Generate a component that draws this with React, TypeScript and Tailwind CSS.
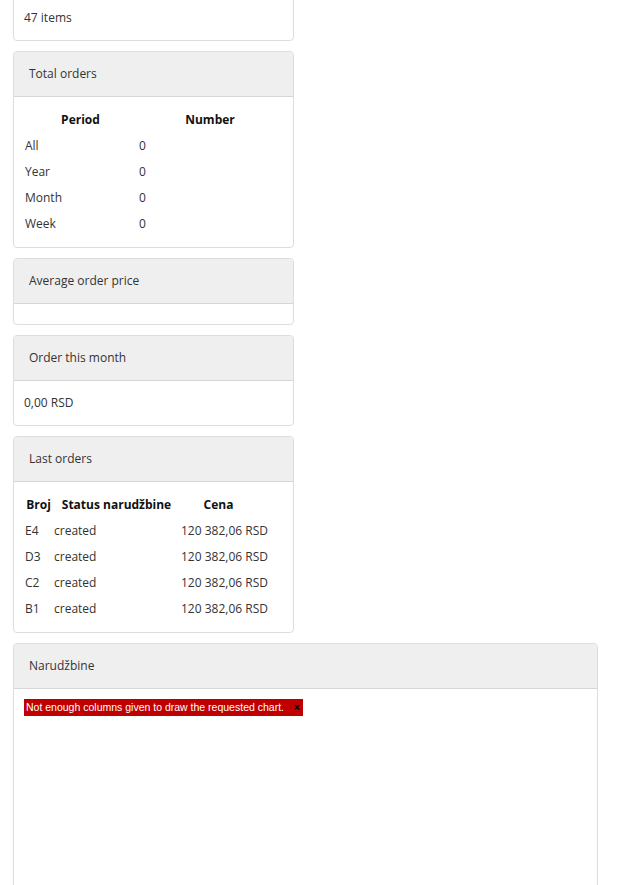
import { ReactNode } from 'react'

const lastOrders = [
	{ id: 'E4', status: 'created', price: '120 382,06 RSD' },
	{ id: 'D3', status: 'created', price: '120 382,06 RSD' },
	{ id: 'C2', status: 'created', price: '120 382,06 RSD' },
	{ id: 'B1', status: 'created', price: '120 382,06 RSD' },
]

const periods = ['All', 'Year', 'Month', 'Week']

const Panel = ({
	title,
	children,
	className = 'w-[281px]',
	bodyClassName = '',
}: {
	title?: string
	children?: ReactNode
	className?: string
	bodyClassName?: string
}) => (
	<div className={`mb-[10px] rounded border border-[#dddddd] bg-white ${className}`}>
		{title && (
			<div className="rounded-t border-b border-[#d6d6d6] bg-[#efefef] px-[15px] py-[10px] leading-[24px]">
				{title}
			</div>
		)}
		<div className={`p-[10px] leading-[24px] ${bodyClassName}`}>{children}</div>
	</div>
)

export default function App() {
	return (
		<div
			className="min-h-[885px] overflow-hidden bg-white pl-[13px] text-[12px] text-[#333333]"
			style={{ fontFamily: '"Open Sans", "Noto Sans", sans-serif' }}
		>
			<div className="-mt-[5px]">
				<Panel>47 items</Panel>
			</div>

			<Panel title="Total orders">
				<table className="w-full table-fixed border-collapse">
					<colgroup>
						<col className="w-[113px]" />
						<col />
					</colgroup>
					<thead>
						<tr className="h-[26px]">
							<th className="text-center font-bold text-[#111]">Period</th>
							<th className="text-center font-bold text-[#111]">Number</th>
						</tr>
					</thead>
					<tbody>
						{periods.map(p => (
							<tr key={p} className="h-[26px]">
								<td className="pl-[1px]">{p}</td>
								<td className="pl-[2px]">0</td>
							</tr>
						))}
					</tbody>
				</table>
			</Panel>

			<Panel title="Average order price" bodyClassName="h-[20px]" />

			<Panel title="Order this month">0,00 RSD</Panel>

			<Panel title="Last orders">
				<table className="w-full table-fixed border-collapse">
					<colgroup>
						<col className="w-[29px]" />
						<col className="w-[127px]" />
						<col />
					</colgroup>
					<thead>
						<tr className="h-[26px]">
							<th className="text-center font-bold text-[#111]">Broj</th>
							<th className="whitespace-nowrap text-center font-bold text-[#111]">Status narudžbine</th>
							<th className="pr-[26px] text-center font-bold text-[#111]">Cena</th>
						</tr>
					</thead>
					<tbody>
						{lastOrders.map(o => (
							<tr key={o.id} className="h-[26px]">
								<td className="pl-[1px]">{o.id}</td>
								<td className="pl-[1px]">{o.status}</td>
								<td className="whitespace-nowrap pl-[1px]">{o.price}</td>
							</tr>
						))}
					</tbody>
				</table>
			</Panel>

			<Panel title="Narudžbine" className="w-[585px]" bodyClassName="h-[320px]">
				<div
					className="flex h-[17px] w-[279px] items-center whitespace-nowrap bg-[#c00000] pl-[2px] text-[10.5px] leading-none text-white"
					style={{ fontFamily: '"Liberation Sans", Arial, sans-serif' }}
				>
					<span>Not enough columns given to draw the requested chart.</span>
					<span className="ml-auto shrink-0 pr-[3px] text-[11px] font-bold text-black">×</span>
				</div>
			</Panel>
		</div>
	)
}
